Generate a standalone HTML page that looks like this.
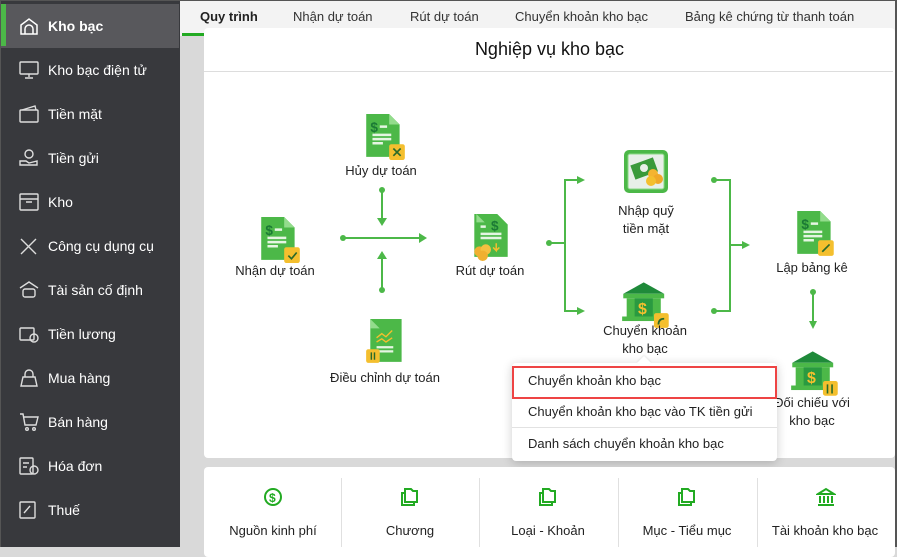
<!DOCTYPE html>
<html><head><meta charset="utf-8">
<style>
*{margin:0;padding:0;box-sizing:border-box}
body{width:897px;height:547px;overflow:hidden;font-family:"Liberation Sans","DejaVu Sans",sans-serif;background:#d9d9d9;position:relative;font-size:13px;color:#222}
.abs{position:absolute}
#side{left:0;top:0;width:180px;height:547px;background:#38393d;border-left:1px solid #555}
.it{position:absolute;left:0;width:178px;height:44px;color:#fff;font-size:14px;line-height:44px;padding-left:47px}
.it svg{position:absolute;left:18px;top:13px}
.act{background:#58585c;font-weight:bold}
.act:before{content:"";position:absolute;left:0;top:0;width:5px;height:42px;background:#4cb848}
#tabs{left:180px;top:0;width:717px;height:36px;background:#f3f3f3}
.tab{position:absolute;top:9px;font-size:13px;color:#333}
.card{background:#fff;border-radius:4px}
.lbl{position:absolute;text-align:center;font-size:13px;color:#222;line-height:18px;white-space:nowrap;transform:translateX(-50%)}
.ln{position:absolute;background:#4cb848}
.dot{position:absolute;width:6px;height:6px;border-radius:50%;background:#4cb848}
.menu{left:512px;top:363px;width:265px;height:98px;background:#fff;border-radius:4px;box-shadow:0 2px 10px rgba(0,0,0,.2)}
.mi{position:absolute;left:16px;font-size:13px;color:#222}
</style></head><body>
<div id="side" class="abs">
 <div class="it act" style="top:4px">Kho bạc<svg width="20" height="18" viewBox="0 0 20 18" fill="none" stroke="#fff" stroke-width="1.5"><path d="M2 8 L10 2 L18 8 V17 H2Z"/><path d="M6 17 V12 a4 4 0 0 1 8 0 V17"/></svg></div>
 <div class="it" style="top:48px">Kho bạc điện tử<svg width="20" height="18" viewBox="0 0 20 18" fill="none" stroke="#ddd" stroke-width="1.4"><rect x="1" y="1" width="18" height="12" rx="1"/><path d="M10 13v3M6 17h8"/></svg></div>
 <div class="it" style="top:92px">Tiền mặt<svg width="20" height="18" viewBox="0 0 20 18" fill="none" stroke="#ddd" stroke-width="1.4"><rect x="1" y="5" width="18" height="12" rx="1"/><path d="M3 5 L16 1 L17 5"/></svg></div>
 <div class="it" style="top:136px">Tiền gửi<svg width="20" height="18" viewBox="0 0 20 18" fill="none" stroke="#ddd" stroke-width="1.4"><circle cx="10" cy="5" r="4"/><path d="M1 12h6l3 2 8-2v4H1z"/></svg></div>
 <div class="it" style="top:180px">Kho<svg width="20" height="18" viewBox="0 0 20 18" fill="none" stroke="#ddd" stroke-width="1.4"><rect x="1" y="1" width="18" height="16" rx="1"/><path d="M1 6h18M7 9h6"/></svg></div>
 <div class="it" style="top:224px">Công cụ dụng cụ<svg width="20" height="18" viewBox="0 0 20 18" fill="none" stroke="#ddd" stroke-width="1.4"><path d="M2 2l15 15M17 2L2 17"/></svg></div>
 <div class="it" style="top:268px">Tài sản cố định<svg width="20" height="18" viewBox="0 0 20 18" fill="none" stroke="#ddd" stroke-width="1.4"><path d="M1 7L10 1l9 6"/><rect x="4" y="8" width="12" height="8" rx="2"/></svg></div>
 <div class="it" style="top:312px">Tiền lương<svg width="20" height="18" viewBox="0 0 20 18" fill="none" stroke="#ddd" stroke-width="1.4"><rect x="1" y="3" width="14" height="12" rx="1"/><circle cx="15" cy="13" r="4"/></svg></div>
 <div class="it" style="top:356px">Mua hàng<svg width="20" height="18" viewBox="0 0 20 18" fill="none" stroke="#ddd" stroke-width="1.4"><path d="M2 17 L4 8 H16 L18 17Z M6 8 V5 a4 4 0 0 1 8 0 V8"/></svg></div>
 <div class="it" style="top:400px">Bán hàng<svg width="20" height="18" viewBox="0 0 20 18" fill="none" stroke="#ddd" stroke-width="1.4"><path d="M1 1h3l2 11h11l2-8H5"/><circle cx="8" cy="16" r="1.3"/><circle cx="15" cy="16" r="1.3"/></svg></div>
 <div class="it" style="top:444px">Hóa đơn<svg width="20" height="18" viewBox="0 0 20 18" fill="none" stroke="#ddd" stroke-width="1.4"><rect x="1" y="1" width="13" height="16" rx="1"/><path d="M4 6h6M4 10h4"/><circle cx="15" cy="13" r="4"/></svg></div>
 <div class="it" style="top:488px">Thuế<svg width="20" height="18" viewBox="0 0 20 18" fill="none" stroke="#ddd" stroke-width="1.4"><rect x="1" y="1" width="15" height="16" rx="1"/><path d="M5 12l6-7"/></svg></div>
</div>

<div id="tabs" class="abs">
 <div class="tab" style="left:20px;font-weight:bold;color:#222">Quy trình</div>
 <div class="tab" style="left:113px">Nhận dự toán</div>
 <div class="tab" style="left:230px">Rút dự toán</div>
 <div class="tab" style="left:335px">Chuyển khoản kho bạc</div>
 <div class="tab" style="left:505px">Bảng kê chứng từ thanh toán</div>
 <div class="abs" style="left:2px;top:33px;width:22px;height:3px;background:#22aa22"></div>
</div>

<div class="abs card" style="left:204px;top:28px;width:691px;height:430px">
 <div class="abs" style="left:0;width:691px;top:11px;text-align:center;font-size:18px;color:#111">Nghiệp vụ kho bạc</div>
 <div class="abs" style="left:0;top:43px;width:689px;height:1px;background:#ddd"></div>
</div>

<svg class="abs" style="left:364px;top:113px" width="42" height="48" viewBox="0 0 40 46"><path d="M2 1h22l10 10v31h-32z" fill="#4cb848"/><path d="M24 1v10h10z" fill="#93dc8c"/><text x="6" y="18" font-size="13" font-weight="bold" fill="#1b7a35" font-family="Liberation Sans">$</text><path d="M15 13h7M8 21h18M8 25h18M8 29h10" stroke="#e5f5e2" stroke-width="2.4"/><rect x="24" y="30" width="15" height="15" rx="2" fill="#f4bf2e"/><path d="M28 34l7 7M35 34l-7 7" stroke="#2a6a2a" stroke-width="1.6"/></svg>
<svg class="abs" style="left:259px;top:216px" width="42" height="48" viewBox="0 0 40 46"><path d="M2 1h22l10 10v31h-32z" fill="#4cb848"/><path d="M24 1v10h10z" fill="#93dc8c"/><text x="6" y="18" font-size="13" font-weight="bold" fill="#1b7a35" font-family="Liberation Sans">$</text><path d="M15 13h7M8 21h18M8 25h18M8 29h10" stroke="#e5f5e2" stroke-width="2.4"/><rect x="24" y="30" width="15" height="15" rx="2" fill="#f4bf2e"/><path d="M28 38l3 3 5-6" stroke="#2a6a2a" stroke-width="1.6" fill="none"/></svg>
<svg class="abs" style="left:470px;top:213px" width="42" height="48" viewBox="0 0 40 46"><path d="M4 1h22l10 10v31h-32z" fill="#4cb848"/><path d="M6 1v8h8z" fill="#93dc8c"/><text x="20" y="17" font-size="13" font-weight="bold" fill="#1b7a35" font-family="Liberation Sans">$</text><path d="M10 13h5M10 20h20M10 24h20" stroke="#e5f5e2" stroke-width="2.4"/><path d="M25 29v7l-3-3M25 36l3-3" stroke="#f4bf2e" stroke-width="1.4" fill="none"/><circle cx="9" cy="37" r="5" fill="#f0b030"/><circle cx="15" cy="35" r="5" fill="#f5c040"/><circle cx="12" cy="41" r="5" fill="#f0b030"/></svg>
<svg class="abs" style="left:366px;top:318px" width="42" height="48" viewBox="0 0 40 46"><path d="M4 1h30v41h-30z" fill="#4cb848"/><path d="M4 1v9h9z" fill="#93dc8c"/><path d="M10 19l5-4 4 3 6-6M10 23l5-3 4 3 6-4" stroke="#f4bf2e" stroke-width="1.3" fill="none"/><path d="M10 28h16M10 32h16" stroke="#e5f5e2" stroke-width="2.2"/><rect x="0" y="30" width="13" height="13" rx="2" fill="#f4bf2e"/><path d="M5 33v7M8 33v7" stroke="#2a6a2a" stroke-width="1.4"/></svg>
<svg class="abs" style="left:795px;top:210px" width="42" height="48" viewBox="0 0 40 46"><path d="M2 1h22l10 10v31h-32z" fill="#4cb848"/><path d="M24 1v10h10z" fill="#93dc8c"/><text x="6" y="18" font-size="13" font-weight="bold" fill="#1b7a35" font-family="Liberation Sans">$</text><path d="M15 13h7M8 21h18M8 25h18M8 29h10" stroke="#e5f5e2" stroke-width="2.4"/><rect x="22" y="29" width="15" height="15" rx="2" fill="#f4bf2e"/><path d="M26 40l7-7" stroke="#2a6a2a" stroke-width="1.6"/></svg>
<svg class="abs" style="left:623px;top:149px" width="46" height="46" viewBox="0 0 46 46"><rect x="1" y="1" width="44" height="43" rx="5" fill="#4cb848"/><rect x="5" y="5" width="36" height="35" rx="2" fill="#e8efe8" stroke="#8ad884" stroke-width="1"/><rect x="9" y="12" width="24" height="15" fill="#3a9a3a" transform="rotate(-20 21 19)"/><circle cx="21" cy="19" r="4" fill="#e8efe8"/><circle cx="30" cy="25" r="5" fill="#f4b430"/><circle cx="35" cy="30" r="5" fill="#f0a828"/><circle cx="28" cy="32" r="5" fill="#f4bf2e"/></svg>
<svg class="abs" style="left:621px;top:280px" width="50" height="48" viewBox="0 0 44 42"><path d="M2 12L20 2l18 10z" fill="#1f8a3a"/><rect x="2" y="12" width="36" height="4" fill="#4cb848"/><rect x="5" y="16" width="30" height="16" fill="#4cb848"/><rect x="12" y="16" width="16" height="16" fill="#2a9a40"/><text x="15" y="30" font-size="14" font-weight="bold" fill="#f4bf2e" font-family="Liberation Sans">$</text><rect x="1" y="32" width="38" height="4" fill="#4cb848"/><rect x="29" y="29" width="13" height="13" rx="2" fill="#f4bf2e"/><path d="M33 39 q0-5 5-5" stroke="#2a6a2a" stroke-width="1.6" fill="none"/></svg>
<svg class="abs" style="left:790px;top:349px" width="50" height="48" viewBox="0 0 44 42"><path d="M2 12L20 2l18 10z" fill="#1f8a3a"/><rect x="2" y="12" width="36" height="4" fill="#4cb848"/><rect x="5" y="16" width="30" height="16" fill="#4cb848"/><rect x="12" y="16" width="16" height="16" fill="#2a9a40"/><text x="15" y="30" font-size="14" font-weight="bold" fill="#f4bf2e" font-family="Liberation Sans">$</text><rect x="1" y="32" width="38" height="4" fill="#4cb848"/><rect x="29" y="28" width="13" height="13" rx="2" fill="#f4bf2e"/><path d="M33 31v8M37 31v8" stroke="#2a6a2a" stroke-width="1.4"/></svg>

<div class="lbl" style="left:381px;top:162px">Hủy dự toán</div>
<div class="lbl" style="left:275px;top:262px">Nhận dự toán</div>
<div class="lbl" style="left:490px;top:262px">Rút dự toán</div>
<div class="lbl" style="left:385px;top:369px">Điều chỉnh dự toán</div>
<div class="lbl" style="left:646px;top:202px">Nhập quỹ<br>tiền mặt</div>
<div class="lbl" style="left:645px;top:322px">Chuyển khoản<br>kho bạc</div>
<div class="lbl" style="left:812px;top:259px">Lập bảng kê</div>
<div class="lbl" style="left:812px;top:394px">Đối chiếu với<br>kho bạc</div>

<div class="ln" style="left:343px;top:237px;width:78px;height:2px"></div><div class="dot" style="left:340px;top:235px"></div>
<svg class="abs" style="left:419px;top:233px" width="8" height="10"><path d="M0 0l8 5-8 5z" fill="#4cb848"/></svg>
<div class="ln" style="left:381px;top:190px;width:2px;height:30px"></div><div class="dot" style="left:379px;top:187px"></div>
<svg class="abs" style="left:377px;top:218px" width="10" height="8"><path d="M0 0h10l-5 8z" fill="#4cb848"/></svg>
<div class="ln" style="left:381px;top:258px;width:2px;height:32px"></div><div class="dot" style="left:379px;top:287px"></div>
<svg class="abs" style="left:377px;top:251px" width="10" height="8"><path d="M0 8h10l-5-8z" fill="#4cb848"/></svg>
<div class="ln" style="left:549px;top:242px;width:16px;height:2px"></div><div class="dot" style="left:546px;top:240px"></div>
<div class="ln" style="left:564px;top:179px;width:2px;height:133px"></div>
<div class="ln" style="left:564px;top:179px;width:14px;height:2px"></div><svg class="abs" style="left:577px;top:176px" width="8" height="8"><path d="M0 0l8 4-8 4z" fill="#4cb848"/></svg>
<div class="ln" style="left:564px;top:310px;width:14px;height:2px"></div><svg class="abs" style="left:577px;top:307px" width="8" height="8"><path d="M0 0l8 4-8 4z" fill="#4cb848"/></svg>
<div class="dot" style="left:711px;top:177px"></div><div class="ln" style="left:714px;top:179px;width:17px;height:2px"></div>
<div class="dot" style="left:711px;top:308px"></div><div class="ln" style="left:714px;top:310px;width:17px;height:2px"></div>
<div class="ln" style="left:729px;top:179px;width:2px;height:133px"></div>
<div class="ln" style="left:729px;top:244px;width:14px;height:2px"></div><svg class="abs" style="left:742px;top:241px" width="8" height="8"><path d="M0 0l8 4-8 4z" fill="#4cb848"/></svg>
<div class="ln" style="left:812px;top:292px;width:2px;height:30px"></div><div class="dot" style="left:810px;top:289px"></div>
<svg class="abs" style="left:809px;top:321px" width="8" height="8"><path d="M0 0h8l-4 8z" fill="#4cb848"/></svg>

<div class="abs menu">
 <div class="abs" style="left:127px;top:-5px;width:10px;height:10px;background:#fff;transform:rotate(45deg);box-shadow:-1px -1px 2px rgba(0,0,0,.08)"></div>
 <div class="abs" style="left:0;top:3px;width:265px;height:33px;border:2px solid #ee4444;background:#fff"></div>
 <div class="mi" style="top:10px">Chuyển khoản kho bạc</div>
 <div class="abs" style="left:0;top:64px;width:265px;height:1px;background:#e2e2e2"></div>
 <div class="mi" style="top:41px">Chuyển khoản kho bạc vào TK tiền gửi</div>
 <div class="mi" style="top:73px">Danh sách chuyển khoản kho bạc</div>
</div>

<div class="abs card" style="left:204px;top:467px;width:691px;height:90px"></div>
<div class="abs" style="left:341px;top:478px;width:1px;height:69px;background:#e0e0e0"></div>
<div class="abs" style="left:479px;top:478px;width:1px;height:69px;background:#e0e0e0"></div>
<div class="abs" style="left:618px;top:478px;width:1px;height:69px;background:#e0e0e0"></div>
<div class="abs" style="left:757px;top:478px;width:1px;height:69px;background:#e0e0e0"></div>
<svg class="abs" style="left:263px;top:487px" width="20" height="20" viewBox="0 0 20 20"><circle cx="10" cy="10" r="8" fill="none" stroke="#22aa22" stroke-width="2"/><text x="6" y="15" font-size="12" font-weight="bold" fill="#22aa22" font-family="Liberation Sans">$</text></svg>
<svg class="abs" style="left:400px;top:487px" width="20" height="20" viewBox="0 0 20 20" fill="none" stroke="#22aa22" stroke-width="2"><path d="M4 6H2v12h12v-2"/><path d="M5 2h6l2 2h4v11H5z"/></svg>
<svg class="abs" style="left:538px;top:487px" width="20" height="20" viewBox="0 0 20 20" fill="none" stroke="#22aa22" stroke-width="2"><path d="M4 6H2v12h12v-2"/><path d="M5 2h6l2 2h4v11H5z"/></svg>
<svg class="abs" style="left:677px;top:487px" width="20" height="20" viewBox="0 0 20 20" fill="none" stroke="#22aa22" stroke-width="2"><path d="M4 6H2v12h12v-2"/><path d="M5 2h6l2 2h4v11H5z"/></svg>
<svg class="abs" style="left:816px;top:487px" width="20" height="20" viewBox="0 0 20 20" fill="none" stroke="#22aa22" stroke-width="2"><path d="M2 7l8-5 8 5z M4 9v7M8 9v7M12 9v7M16 9v7M2 18h16"/></svg>
<div class="lbl" style="left:273px;top:522px">Nguồn kinh phí</div>
<div class="lbl" style="left:410px;top:522px">Chương</div>
<div class="lbl" style="left:548px;top:522px">Loại - Khoản</div>
<div class="lbl" style="left:687px;top:522px">Mục - Tiểu mục</div>
<div class="lbl" style="left:825px;top:522px">Tài khoản kho bạc</div>
<div class="abs" style="left:895px;top:0;width:2px;height:547px;background:#555"></div>
<div class="abs" style="left:0;top:0;width:897px;height:1px;background:#555"></div>
</body></html>
